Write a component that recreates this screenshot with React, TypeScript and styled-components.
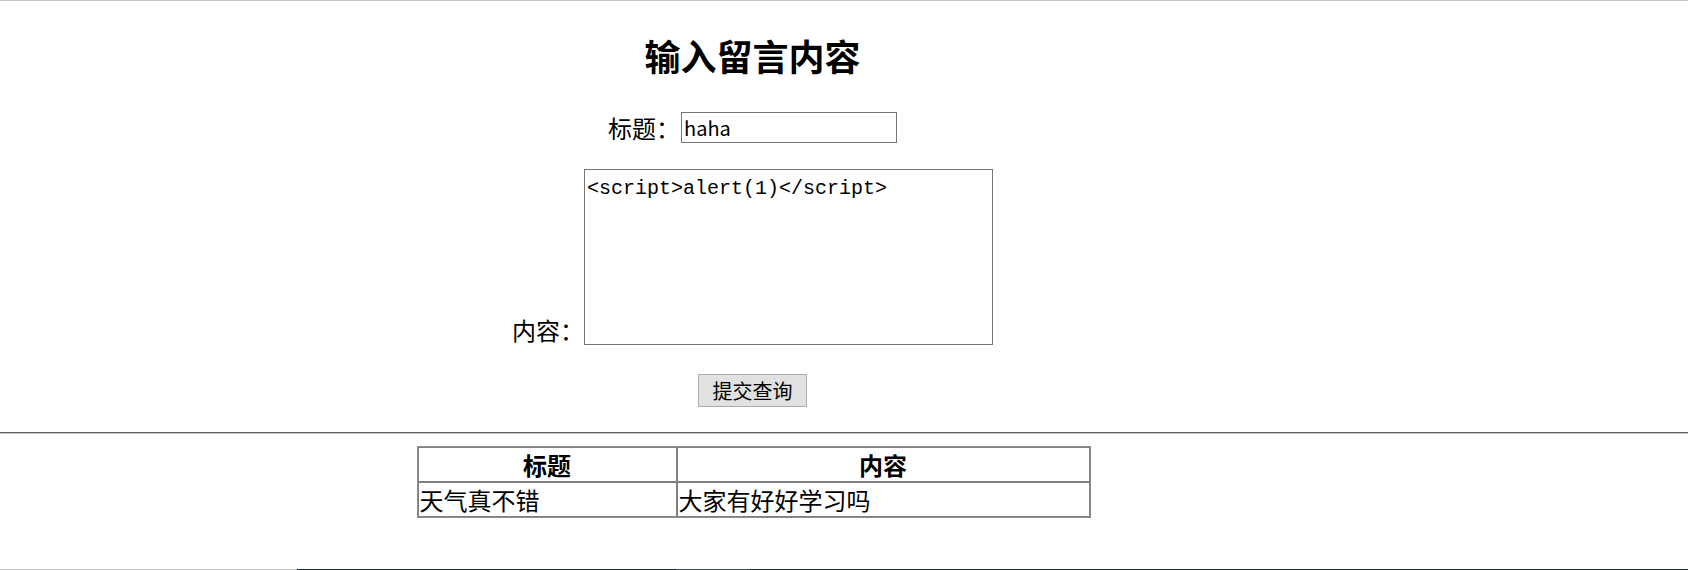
import React from 'react';
import styled, { createGlobalStyle } from 'styled-components';

const GlobalStyle = createGlobalStyle`
  html, body {
    margin: 0;
    padding: 0;
    background: #ffffff;
  }
  body {
    font-family: "Noto Sans CJK SC", "Noto Sans", sans-serif;
    color: #000000;
  }
`;

const Page = styled.div`
  display: flex;
  flex-direction: column;
  height: 570px;
  overflow: hidden;
`;

const TopEdge = styled.div`
  flex: none;
  height: 1px;
  background: #c3c3c3;
`;

const BottomEdge = styled.div`
  flex: none;
  margin-top: auto;
  height: 1px;
  background: linear-gradient(
    to right,
    #c6c6c6 0 297px,
    #1e2832 297px 676px,
    #474e55 676px 750px,
    #1e2832 750px 100%
  );
`;

const Section = styled.section<{ $width: number }>`
  width: ${(p) => p.$width}px;
  display: flex;
  flex-direction: column;
  align-items: center;
`;

const Title = styled.h2`
  margin: 30px 0 0;
  height: 48px;
  font-size: 36px;
  line-height: 48px;
  font-weight: 700;
`;

const Form = styled.form`
  display: flex;
  flex-direction: column;
  align-items: center;
`;

const FieldRow = styled.div<{ $top: number; $align: 'center' | 'flex-end' }>`
  display: flex;
  align-items: ${(p) => p.$align};
  margin-top: ${(p) => p.$top}px;
`;

const Label = styled.label<{ $lh: number }>`
  font-size: 24px;
  line-height: ${(p) => p.$lh}px;
  white-space: nowrap;
`;

const TextInput = styled.input`
  box-sizing: border-box;
  width: 216px;
  height: 31px;
  margin: 0 0 0 1px;
  padding: 1px 2px;
  border: 1px solid #767676;
  border-radius: 0;
  font-family: "Noto Sans CJK SC", "Noto Sans", sans-serif;
  font-size: 20px;
  line-height: 27px;
  color: #000;
  background: #fff;
  outline: none;
`;

const TextArea = styled.textarea`
  box-sizing: border-box;
  width: 409px;
  height: 176px;
  margin: 0;
  padding: 4px 2px 2px;
  border: 1px solid #767676;
  border-radius: 0;
  font-family: "Liberation Mono", "DejaVu Sans Mono", monospace;
  font-size: 20px;
  line-height: 30px;
  color: #000;
  background: #fff;
  resize: none;
  outline: none;
`;

const SubmitButton = styled.button`
  box-sizing: border-box;
  width: 109px;
  height: 33px;
  margin-top: 29px;
  padding: 0;
  border: 1px solid #adadad;
  border-radius: 0;
  background: #e1e1e1;
  font-family: "Noto Sans CJK SC", "Noto Sans", sans-serif;
  font-size: 20px;
  line-height: 31px;
  color: #000;
`;

const Rule = styled.hr`
  flex: none;
  width: 100%;
  margin: 25px 0 0;
  height: 0;
  border: 0;
  border-top: 1px solid #616161;
  border-bottom: 1px solid #c4c4c4;
`;

const Table = styled.table`
  box-sizing: border-box;
  width: 674px;
  margin-top: 12px;
  table-layout: fixed;
  border-collapse: separate;
  border-spacing: 0;
  border: 1px solid #8e8e8e;
  font-size: 24px;
  line-height: 31px;
`;

const HeadCell = styled.th<{ $width?: number }>`
  box-sizing: border-box;
  ${(p) => (p.$width ? `width: ${p.$width}px;` : '')}
  padding: 1px;
  border: 1px solid #808080;
  font-weight: 700;
  text-align: center;
  white-space: nowrap;
`;

const BodyCell = styled.td`
  padding: 1px;
  border: 1px solid #808080;
  text-align: left;
  white-space: nowrap;
`;

const messages = [{ title: '天气真不错', content: '大家有好好学习吗' }];

export default function App() {
  return (
    <>
      <GlobalStyle />
      <Page>
        <TopEdge />
        <Section $width={1505}>
          <Title>输入留言内容</Title>
          <Form onSubmit={(e) => e.preventDefault()}>
            <FieldRow $top={33} $align="center">
              <Label $lh={31}>标题：</Label>
              <TextInput type="text" defaultValue="haha" />
            </FieldRow>
            <FieldRow $top={26} $align="flex-end">
              <Label $lh={30}>内容：</Label>
              <TextArea defaultValue="<script>alert(1)</script>" />
            </FieldRow>
            <SubmitButton type="submit">提交查询</SubmitButton>
          </Form>
        </Section>
        <Rule />
        <Section $width={1507}>
          <Table>
            <thead>
              <tr>
                <HeadCell $width={259}>标题</HeadCell>
                <HeadCell>内容</HeadCell>
              </tr>
            </thead>
            <tbody>
              {messages.map((m, i) => (
                <tr key={i}>
                  <BodyCell>{m.title}</BodyCell>
                  <BodyCell>{m.content}</BodyCell>
                </tr>
              ))}
            </tbody>
          </Table>
        </Section>
        <BottomEdge />
      </Page>
    </>
  );
}
